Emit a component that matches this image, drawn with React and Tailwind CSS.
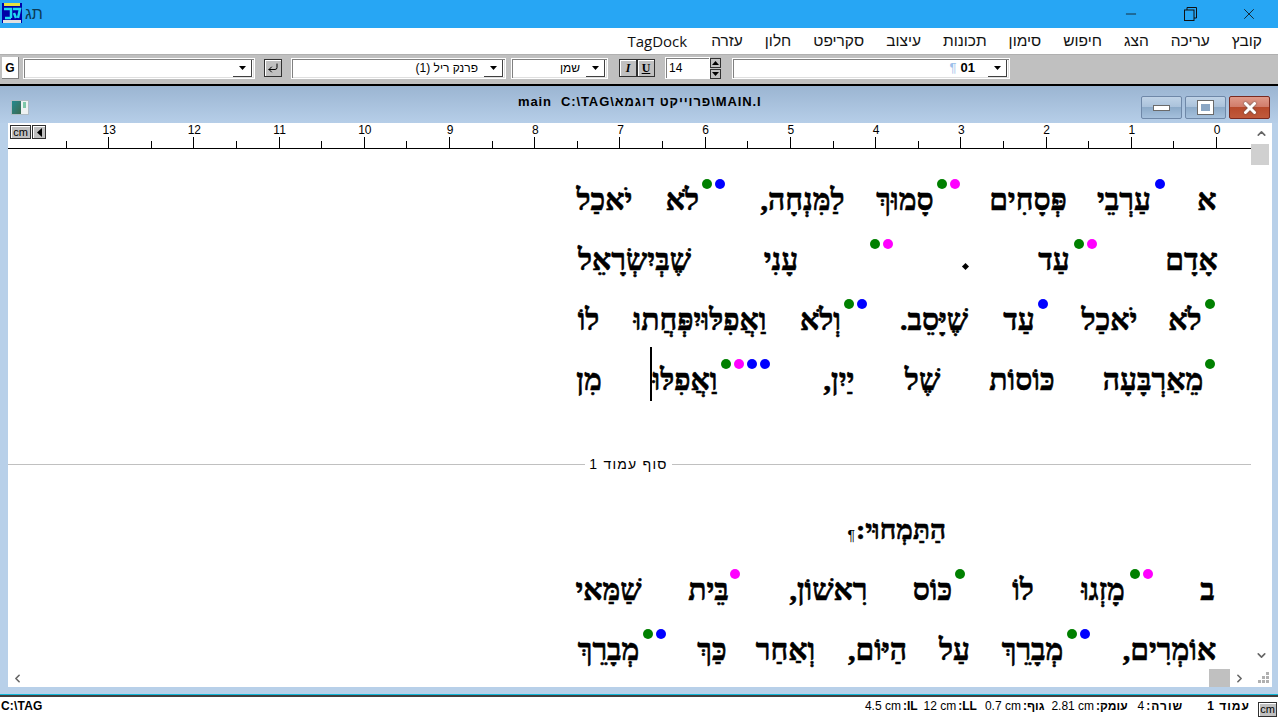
import { ChevronUp, ChevronDown, ChevronLeft, ChevronRight, X, Minus, CornerDownLeft } from "lucide-react";

const rulerNumbers = [13, 12, 11, 10, 9, 8, 7, 6, 5, 4, 3, 2, 1, 0];
const menuItems = ["קובץ", "עריכה", "הצג", "חיפוש", "סימון", "תכונות", "עיצוב", "סקריפט", "חלון", "עזרה", "TagDock"];

function Caret({ className = "" }) {
  return (
    <svg width="7" height="4" viewBox="0 0 7 4" className={className}>
      <path d="M0 0h7L3.5 4z" fill="#000" />
    </svg>
  );
}

function Combo({ className, children }) {
  return (
    <div className={`h-[21px] flex items-center bg-white border border-white shadow-[inset_1px_1px_0_#808080,inset_-1px_-1px_0_#dfdfdf] ${className}`}>
      <div className="flex-1 flex items-center justify-end pr-[6px] text-[12px] overflow-hidden whitespace-nowrap">{children}</div>
      <div className="w-[19px] h-[17px] mr-[2px] flex items-center justify-center bg-white border-r border-b border-[#404040]">
        <Caret />
      </div>
    </div>
  );
}

function Word({ className = "", children }) {
  return <span className={`flex justify-center whitespace-nowrap shrink-0 ${className}`}>{children}</span>;
}

function Dots({ className = "", colors }) {
  return (
    <span className={`flex flex-row-reverse gap-[3px] self-start mt-[9px] shrink-0 ${className}`}>
      {colors.map((c, i) => (
        <span key={i} className={`w-[10px] h-[10px] rounded-full ${c}`} />
      ))}
    </span>
  );
}

const G = "bg-[#008000]";
const B = "bg-[#0000ff]";
const M = "bg-[#ff00ff]";

function Line({ children }) {
  return (
    <div dir="rtl" className="h-[60px] flex items-center pr-[35px] leading-[60px]">
      {children}
    </div>
  );
}

function WinButton({ className, children }) {
  return (
    <div className={`h-[23px] w-[41px] rounded-[2px] border flex items-center justify-center ${className}`}>
      {children}
    </div>
  );
}

function Stat({ className = "", labelClass = "", label, value }) {
  return (
    <span className={`flex gap-[2px] whitespace-nowrap ${className}`}>
      <b className={labelClass}><bdi>{label}</bdi>:</b>
      <bdi>{value}</bdi>
    </span>
  );
}

export default function App() {
  return (
    <div className="w-[1278px] h-[720px] overflow-hidden flex flex-col bg-white text-black font-['Liberation_Sans',sans-serif]">
      {/* Title bar */}
      <div className="h-[28px] bg-[#27a6f4] flex items-center shrink-0">
        <svg width="20" height="20" viewBox="0 0 20 20" className="ml-[2px] -mt-[2px]">
          <rect width="20" height="20" fill="#0000a8" />
          <rect x="2" y="0" width="16" height="3" fill="#e8e040" />
          <rect x="1" y="17" width="18" height="3" fill="#e0e0e0" />
          <path d="M2 6h7v9M3 15h6M11 6h7l-2 9M12 10l2 5" stroke="#22d8f0" strokeWidth="2.5" fill="none" />
        </svg>
        <span className="ml-[3px] text-[16px] text-[#0b3a55]">תג</span>
        <div className="ml-auto flex items-center text-[#111]">
          <Minus size={16} strokeWidth={1.2} className="mr-[45px]" />
          <svg width="13" height="14" viewBox="0 0 13 14" className="mr-[43px]" fill="none" stroke="#111" strokeWidth="1">
            <rect x="0.5" y="3" width="9.5" height="10.5" />
            <path d="M3 3V0.5h9.5V11H10" />
          </svg>
          <X size={18} strokeWidth={1.1} className="mr-[20px]" />
        </div>
      </div>

      {/* Menu */}
      <div dir="rtl" className="h-[26px] flex items-center gap-[22px] pr-[16px] shrink-0 text-[15.5px] text-[#111]">
        {menuItems.map((m) => (
          <span key={m} className={m === "TagDock" ? "mr-[2px] font-['Open_Sans',sans-serif] text-[15px]" : ""}>{m}</span>
        ))}
      </div>

      {/* Toolbar */}
      <div className="h-[30px] bg-[#c0c0c0] flex items-center pb-[3px] shrink-0 border-t border-[#b0b0b0]">
        <div className="ml-[2px] w-[17px] h-[22px] bg-white border-r border-b border-[#808080] flex items-center justify-center text-[12px] font-bold">G</div>
        <Combo className="ml-[4px] w-[232px]" />
        <div className="ml-[9px] w-[18px] h-[18px] bg-[#c0c0c0] border border-[#303030] shadow-[inset_1px_1px_0_#fff] flex items-center justify-center">
          <CornerDownLeft size={12} strokeWidth={2} />
        </div>
        <Combo className="ml-[9px] w-[215px]">
          <span dir="rtl">פרנק ריל (1)</span>
        </Combo>
        <Combo className="ml-[5px] w-[97px]">
          <span dir="rtl">שמן</span>
        </Combo>
        <div className="ml-[11px] w-[18px] h-[18px] bg-[#c0c0c0] border border-[#303030] shadow-[inset_1px_1px_0_#fff] flex items-center justify-center text-[12px] font-bold italic font-['Liberation_Serif',serif]">I</div>
        <div className="w-[18px] h-[18px] bg-[#c0c0c0] border border-[#303030] shadow-[inset_1px_1px_0_#fff] flex items-center justify-center text-[12px] font-bold underline font-['Liberation_Serif',serif]">U</div>
        <div className="ml-[10px] w-[45px] h-[22px] bg-white border border-white shadow-[inset_1px_1px_0_#808080] flex items-center pl-[3px] text-[12px]">14</div>
        <div className="w-[11px] h-[21px] flex flex-col gap-px">
          <div className="flex-1 bg-[#c0c0c0] border border-[#303030] flex items-center justify-center">
            <Caret className="rotate-180" />
          </div>
          <div className="flex-1 bg-[#c0c0c0] border border-[#303030] flex items-center justify-center">
            <Caret />
          </div>
        </div>
        <Combo className="ml-[11px] w-[278px]">
          <span className="text-[#9cc0ea] text-[13px] mr-[4px]">¶</span>
          <span className="font-bold text-[13px] mr-[7px]">01</span>
        </Combo>
      </div>
      <div className="h-[2px] bg-black shrink-0" />

      {/* Document window */}
      <div className="flex-1 min-h-0 flex flex-col bg-[#b8d0e9]">
        <div className="h-[37px] shrink-0 flex items-center relative bg-gradient-to-b from-[#9bb5d2] to-[#b6cee8]">
          <div className="ml-[11px] mt-[6px] w-[18px] h-[15px] bg-[#eef2f2] border border-[#b0bcc4] flex">
            <div className="w-[9px] h-full bg-gradient-to-br from-[#208a90] to-[#3a6a50]" />
            <div className="w-[3px] h-[6px] ml-[2px] mt-[1px] bg-[#7fc8a8]" />
          </div>
          <span className="absolute left-[518px] top-[8px] leading-[15px] text-[13px] font-bold tracking-[0.9px] whitespace-pre">main  C:\TAG\פרוייקט דוגמא\MAIN.I</span>
          <div className="ml-auto mr-[8px] mt-[6px] flex gap-[3px]">
            <WinButton className="border-[#6f88a8] bg-[linear-gradient(#c0d3e7_0%,#a9c1da_50%,#8dabc9_50%,#a5c0dc_100%)]">
              <div className="w-[17px] h-[6px] bg-white border border-[#6a6a6a]" />
            </WinButton>
            <WinButton className="border-[#6f88a8] bg-[linear-gradient(#c0d3e7_0%,#a9c1da_50%,#8dabc9_50%,#a5c0dc_100%)]">
              <div className="w-[15px] h-[13px] bg-[#8aa6c4] border-[3px] border-white outline outline-1 outline-[#6a6a6a]" />
            </WinButton>
            <WinButton className="border-[#7a2a20] bg-[linear-gradient(#e09a8a_0%,#d07a68_50%,#b84a2c_50%,#c05a3c_100%)]">
              <X size={18} strokeWidth={4} className="text-white drop-shadow-[0_0_1px_#555]" />
            </WinButton>
          </div>
        </div>

        <div className="flex-1 min-h-0 flex flex-col ml-[8px] mr-[6px] bg-white">
          <div className="flex-1 min-h-0 flex">
            <div className="flex-1 min-w-0 flex flex-col">
              {/* Ruler */}
              <div className="h-[26px] shrink-0 flex items-stretch relative border-b border-black">
                <div className="absolute left-[2px] top-[2px] flex gap-px">
                  <div className="w-[21px] h-[14px] bg-[#c0c0c0] border border-[#303030] shadow-[inset_1px_1px_0_#fff] flex items-center justify-center text-[11px]">cm</div>
                  <div className="w-[14px] h-[14px] bg-[#c0c0c0] border border-[#303030] shadow-[inset_1px_1px_0_#fff] flex items-center justify-center">
                    <svg width="5" height="9" viewBox="0 0 5 9"><path d="M5 0v9L0 4.5z" fill="#000" /></svg>
                  </div>
                </div>
                <div className="ml-auto mr-[34px] flex items-end">
                  {rulerNumbers.map((n) => (
                    <div key={n} className="w-[85.23px] h-full flex items-end relative">
                      <div className="w-1/2 h-[7px] border-r border-black" />
                      <div className="w-1/2 h-[11px] border-r border-black" />
                      <span className="absolute right-0 translate-x-1/2 top-[1px] text-[12px] leading-[13px] text-black">{n}</span>
                    </div>
                  ))}
                </div>
              </div>

              {/* Page */}
              <div className="flex-1 min-h-0 overflow-hidden pt-[21px] font-['Liberation_Serif',serif] font-bold text-[30px] [-webkit-text-stroke:0.6px_#000]">
                <Line>
                  <Word className="w-[18px]">א</Word>
                  <Dots className="mr-[33px]" colors={[B]} />
                  <Word className="w-[56px] mr-[3px]">עַרְבֵי</Word>
                  <Word className="w-[70px] mr-[33px]">פְּסָחִים</Word>
                  <Dots className="mr-[33px]" colors={[G, M]} />
                  <Word className="w-[56px] mr-[4px]">סָמוּךְ</Word>
                  <Word className="w-[81px] mr-[34px]">לַמִּנְחָה,</Word>
                  <Dots className="mr-[37px]" colors={[G, B]} />
                  <Word className="w-[31px] mr-[4px]">לֹא</Word>
                  <Word className="w-[55px] mr-[35px]">יֹאכַל</Word>
                </Line>
                <Line>
                  <Word className="w-[49px]">אָדָם</Word>
                  <Dots className="mr-[70px]" colors={[G, M]} />
                  <Word className="w-[32px] mr-[4px]">עַד</Word>
                  <span className="w-[5px] h-[5px] rotate-45 bg-black mr-[70px] mt-[12px] shrink-0" />
                  <Dots className="mr-[70px]" colors={[G, M]} />
                  <Word className="w-[38px] mr-[70px]">עָנִי</Word>
                  <Word className="w-[115px] mr-[70px]">שֶׁבְּיִשְׂרָאֵל</Word>
                </Line>
                <Line>
                  <Dots className="mr-[1px]" colors={[G]} />
                  <Word className="w-[32px] mr-[4px]">לֹא</Word>
                  <Word className="w-[55px] mr-[32px]">יֹאכַל</Word>
                  <Dots className="mr-[34px]" colors={[B]} />
                  <Word className="w-[32px] mr-[3px]">עַד</Word>
                  <Word className="w-[72px] mr-[33px]">שֶׁיָּסֵב.</Word>
                  <Dots className="mr-[31px]" colors={[G, B]} />
                  <Word className="w-[41px] mr-[3px]">וְלֹא</Word>
                  <Word className="w-[134px] mr-[33px]">וַאֲפִלּוּיִפְּחֲתוּ</Word>
                  <Word className="w-[23px] mr-[33px]">לוֹ</Word>
                </Line>
                <Line>
                  <Dots className="mr-[1px]" colors={[G]} />
                  <Word className="w-[98px] mr-[3px]">מֵאַרְבָּעָה</Word>
                  <Word className="w-[64px] mr-[50px]">כּוֹסוֹת</Word>
                  <Word className="w-[35px] mr-[50px]">שֶׁל</Word>
                  <Word className="w-[32px] mr-[50px]">יַיִן,</Word>
                  <Dots className="mr-[53px]" colors={[G, M, B, B]} />
                  <Word className="w-[66px] mr-[3px]">וַאֲפִלּוּ</Word>
                  <span className="w-[2px] h-[54px] bg-black self-start -mt-[3px] shrink-0" />
                  <Word className="w-[24px] mr-[49px]">מִן</Word>
                </Line>

                {/* Page break */}
                <div dir="rtl" className="h-[14px] mt-[47px] mb-[29px] flex items-center font-['Liberation_Sans',sans-serif] font-normal text-[14px] tracking-[1.2px] [-webkit-text-stroke:0]">
                  <div className="w-[579px] h-px bg-[#c0c0c0]" />
                  <span className="w-[87px] text-center whitespace-nowrap">סוף עמוד 1</span>
                  <div className="flex-1 h-px bg-[#c0c0c0]" />
                </div>

                <div dir="rtl" className="h-[60px] flex items-center pr-[305px] leading-[60px]">
                  <Word className="w-[90px] text-[28px]">הַתַּמְחוּי:</Word>
                  <span className="font-['Liberation_Sans',sans-serif] font-normal text-[14px] leading-none mt-[10px] mr-[1px] text-black [-webkit-text-stroke:0]">¶</span>
                </div>
                <Line>
                  <Word className="w-[17px]">ב</Word>
                  <Dots className="mr-[46px]" colors={[G, M]} />
                  <Word className="w-[46px] mr-[4px]">מָזְגוּ</Word>
                  <Word className="w-[22px] mr-[46px]">לוֹ</Word>
                  <Dots className="mr-[47px]" colors={[G]} />
                  <Word className="w-[39px] mr-[3px]">כּוֹס</Word>
                  <Word className="w-[77px] mr-[46px]">רִאשׁוֹן,</Word>
                  <Dots className="mr-[50px]" colors={[M]} />
                  <Word className="w-[43px]">בֵּית</Word>
                  <Word className="w-[63px] mr-[47px]">שַׁמַּאי</Word>
                </Line>
                <Line>
                  <Word className="w-[91px] mr-[1px]">אוֹמְרִים,</Word>
                  <Dots className="mr-[34px]" colors={[G, B]} />
                  <Word className="w-[61px] mr-[4px]">מְבָרֵךְ</Word>
                  <Word className="w-[31px] mr-[32px]">עַל</Word>
                  <Word className="w-[59px] mr-[32px]">הַיּוֹם,</Word>
                  <Word className="w-[55px] mr-[35px]">וְאַחַר</Word>
                  <Word className="w-[30px] mr-[31px]">כַּךְ</Word>
                  <Dots className="mr-[31px]" colors={[G, B]} />
                  <Word className="w-[63px] mr-[3px]">מְבָרֵךְ</Word>
                </Line>
              </div>
            </div>

            {/* Vertical scrollbar */}
            <div className="w-[21px] shrink-0 flex flex-col items-center text-[#666]">
              <ChevronUp size={13} strokeWidth={3} className="mt-[4px]" />
              <div className="mt-[4px] w-[18px] h-[21px] bg-[#d0d0d0] -ml-[3px]" />
              <ChevronDown size={13} strokeWidth={3} className="mt-auto mb-[7px]" />
            </div>
          </div>

          {/* Horizontal scrollbar */}
          <div className="h-[18px] shrink-0 flex items-center text-[#666]">
            <ChevronLeft size={13} strokeWidth={3} className="ml-[3px]" />
            <div className="ml-auto w-[21px] h-[18px] bg-[#c0c0c0]" />
            <ChevronRight size={13} strokeWidth={3} className="ml-[3px]" />
            <svg width="12" height="12" viewBox="0 0 12 12" fill="#b0b0b0" className="ml-[12px] mr-[2px]">
              <rect x="8" y="0" width="3" height="3" />
              <rect x="4" y="4" width="3" height="3" />
              <rect x="8" y="4" width="3" height="3" />
              <rect x="0" y="8" width="3" height="3" />
              <rect x="4" y="8" width="3" height="3" />
              <rect x="8" y="8" width="3" height="3" />
            </svg>
          </div>
        </div>
        <div className="h-[7px] shrink-0" />
      </div>

      {/* Status bar */}
      <div className="h-px bg-[#10b8d8] shrink-0" />
      <div className="h-[2px] bg-[#404040] shrink-0" />
      <div className="h-[23px] shrink-0 flex items-center text-[12px]">
        <span className="ml-[1px] mb-[6px] font-bold tracking-[0.2px]">C:\TAG</span>
        <div dir="rtl" className="ml-auto flex items-center">
          <div className="w-[19px] h-[15px] mr-px mt-[1px] bg-[#c0c0c0] border border-[#303030] shadow-[inset_1px_1px_0_#fff] flex items-center justify-center text-[11px]">cm</div>
          <div className="mb-[6px] flex items-center">
            <b className="mr-[8px] tracking-[1px]">עמוד 1</b>
            <Stat className="mr-[24px]" labelClass="tracking-[1px]" label="שורה" value="4" />
            <Stat className="mr-[10px]" label="עומק" value="2.81 cm" />
            <Stat className="mr-[7px]" label="גוף" value="0.7 cm" />
            <Stat className="mr-[8px]" label="LL" value="12 cm" />
            <Stat className="mr-[6px]" label="IL" value="4.5 cm" />
          </div>
        </div>
      </div>
    </div>
  );
}
